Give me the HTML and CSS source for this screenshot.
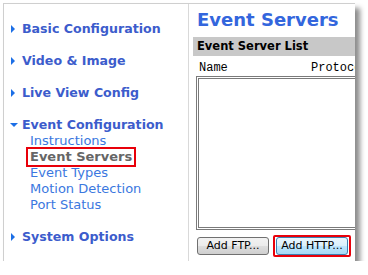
FILE: index.html
```html
<!DOCTYPE html>
<html>
<head>
<meta charset="utf-8">
<link rel="stylesheet" href="styles.css">
</head>
<body>
<div class="frame">
  <nav class="nav">
    <div class="item"><span class="tri right"></span>Basic Configuration</div>
    <div class="item"><span class="tri right"></span>Video &amp; Image</div>
    <div class="item"><span class="tri right"></span>Live View Config</div>
    <div class="item open"><span class="tri down"></span>Event Configuration</div>
    <ul class="sub">
      <li>Instructions</li>
      <li><span class="active">Event Servers</span></li>
      <li>Event Types</li>
      <li>Motion Detection</li>
      <li>Port Status</li>
    </ul>
    <div class="item"><span class="tri right"></span>System Options</div>
  </nav>
  <main class="content">
    <h1 class="title">Event Servers</h1>
    <div class="bar">Event Server List</div>
    <div class="cols"><span class="col-name">Name</span><span>Protocol</span></div>
    <div class="listbox"></div>
    <div class="buttons">
      <button class="btn">Add FTP...</button>
      <span class="hl"><button class="btn hover">Add HTTP...</button></span>
    </div>
  </main>
</div>
</body>
</html>
```
FILE: styles.css
```css
html, body { margin: 0; padding: 0; background: #fff; }
body { font-family: "DejaVu Sans", Verdana, sans-serif; }

.frame {
  margin: 3px 0 0 3px;
  width: 351px;
  height: 257px;
  border-top: 1px solid #cfcfcf;
  border-left: 1px solid #cfcfcf;
  display: flex;
  overflow: hidden;
  box-shadow: 5px 5px 5px rgba(0, 0, 0, 0.45);
  background: #fff;
}

.nav {
  flex: none;
  width: 185px;
  border-right: 1px solid #d9d9d9;
  padding-top: 17px;
  box-sizing: border-box;
}

.item {
  display: flex;
  align-items: center;
  font-size: 12.6px;
  font-weight: bold;
  line-height: 16px;
  color: #3c5ccc;
  margin-bottom: 16px;
  padding-left: 7px;
}
.item.open { margin-bottom: 0; }

.tri { width: 0; height: 0; flex: none; }
.tri.right {
  border-top: 4px solid transparent;
  border-bottom: 4px solid transparent;
  border-left: 4px solid #1c6fe6;
  margin-right: 7px;
}
.tri.down {
  border-left: 4px solid transparent;
  border-right: 4px solid transparent;
  border-top: 4px solid #1c6fe6;
  margin-left: -1px;
  margin-right: 4px;
}

.sub {
  list-style: none;
  margin: 0 0 16px 0;
  padding: 0 0 0 25px;
  font-size: 13px;
  line-height: 16px;
  color: #3b78e0;
}
.sub li { padding-left: 1px; }
.active {
  display: inline-block;
  font-weight: bold;
  color: #666;
  padding: 0 2px;
  margin-left: -2px;
  outline: 2px solid #e8000a;
}

.content {
  flex: 1;
  min-width: 0;
  overflow: hidden;
}

.title {
  margin: 0;
  padding: 5px 0 0 8px;
  font-size: 18px;
  line-height: 22px;
  font-weight: bold;
  color: #3366dd;
  white-space: nowrap;
}

.bar {
  margin: 6px 0 0 4px;
  width: 300px;
  height: 19px;
  line-height: 19px;
  background: #c8c8c8;
  font-size: 11.5px;
  font-weight: bold;
  color: #000;
  padding-left: 4px;
  white-space: nowrap;
}

.cols {
  margin: 5px 0 0 10px;
  font-family: "Liberation Mono", "Courier New", monospace;
  font-size: 12px;
  line-height: 14px;
  color: #000;
  white-space: nowrap;
}
.col-name { display: inline-block; width: 112px; }

.listbox {
  margin: 1px 0 0 7px;
  width: 300px;
  height: 148px;
  border: 3px double #7a7a7a;
}

.buttons {
  margin: 5px 0 0 8px;
  display: flex;
  align-items: center;
  gap: 4px;
}

.btn {
  font-family: "DejaVu Sans", Verdana, sans-serif;
  font-size: 11px;
  width: 72px;
  height: 18px;
  padding: 0;
  border: 1px solid #707070;
  border-radius: 3px;
  background: linear-gradient(#f2f2f2 0%, #ebebeb 50%, #dddddd 51%, #cfcfcf 100%);
  color: #000;
  line-height: 16px;
  white-space: nowrap;
}
.btn.hover {
  border-color: #3c7fb1;
  background: linear-gradient(#eaf6fd 0%, #d9f0fc 50%, #bee6fd 51%, #a7d9f5 100%);
}

.hl {
  display: inline-flex;
  border: 2px solid #e8000a;
  border-radius: 2px;
  padding: 0 1px;
}
```
